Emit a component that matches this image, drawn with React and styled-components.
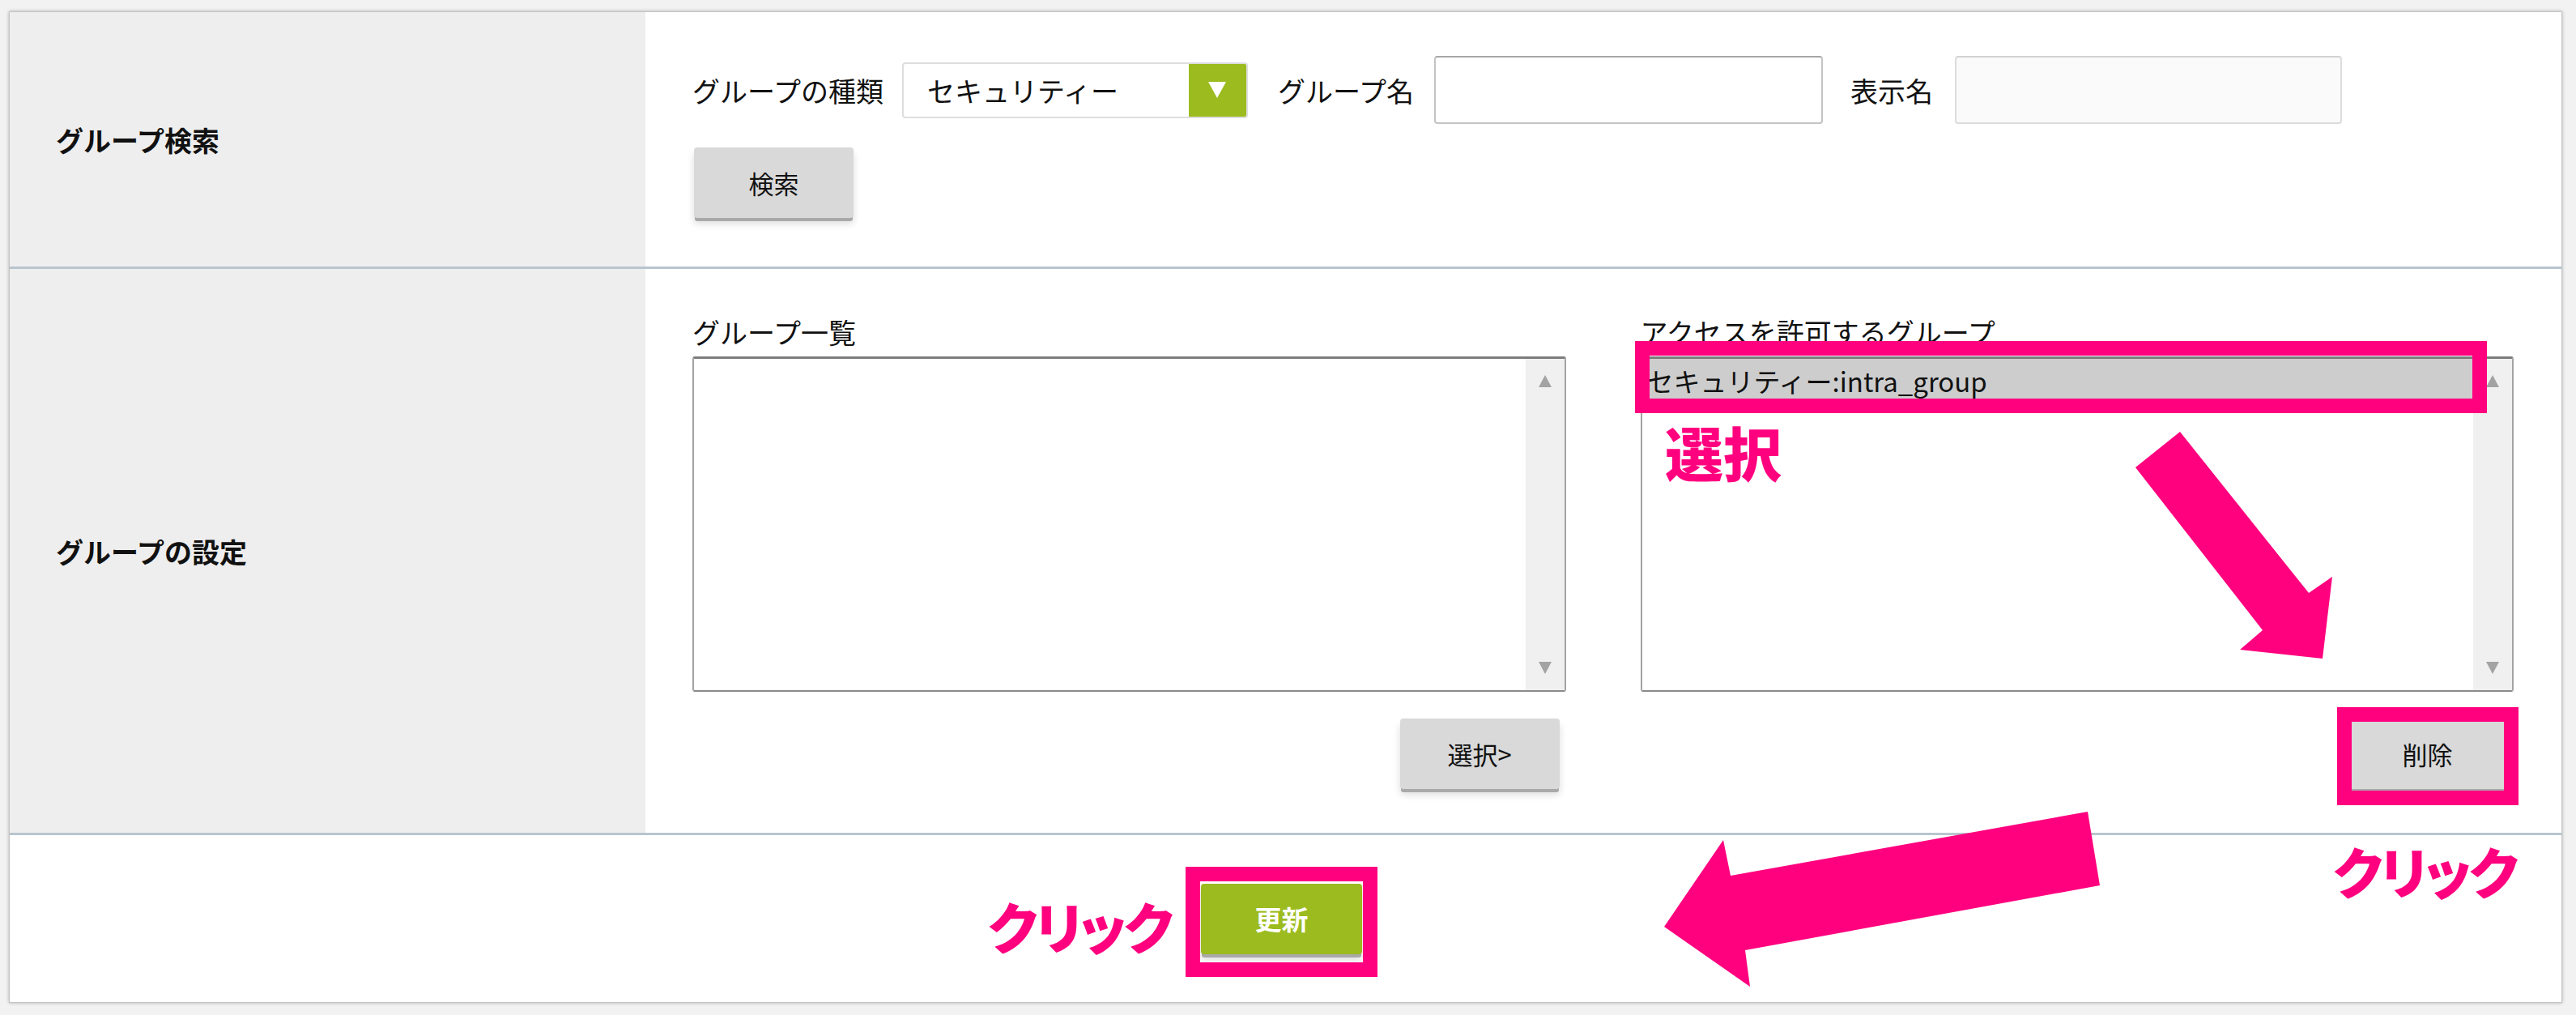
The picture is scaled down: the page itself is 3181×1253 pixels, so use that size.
import React from "react";
import styled, { createGlobalStyle } from "styled-components";

const PINK = "#ff007f";
const GREEN = "#9bbb1f";

const GlobalStyle = createGlobalStyle`
  html, body {
    margin: 0;
    padding: 0;
    background: #f2f2f2;
  }
  body {
    font-family: "Noto Sans CJK JP", "Noto Sans", sans-serif;
    color: #111;
  }
`;

const Page = styled.div`
  padding: 14px 17px 15px 11px;
`;

const Frame = styled.div`
  position: relative;
  width: 3153px;
  box-sizing: border-box;
  background: #fff;
  border: 1px solid #c4c4c4;
  box-shadow: 0 0 4px rgba(0, 0, 0, 0.28);
`;

const Row = styled.div`
  display: grid;
  grid-template-columns: 785px 1fr;
  height: ${(p) => p.$height}px;
  border-bottom: ${(p) => (p.$last ? "none" : "3px solid #b8c5cf")};
`;

const Head = styled.div`
  display: flex;
  align-items: center;
  padding-left: 57px;
  background: #eeeeee;
  font-size: 34px;
  font-weight: 700;
`;

const Body = styled.div`
  padding: ${(p) => p.$pad};
`;

const FullRow = styled.div`
  display: flex;
  align-items: center;
  justify-content: center;
  height: 206px;
  padding-right: 10px;
`;

const Line = styled.div`
  display: flex;
  align-items: center;
  height: 84px;
`;

const Label = styled.span`
  font-size: 34px;
  margin-right: ${(p) => p.$gap || 24}px;
  white-space: nowrap;
`;

const Select = styled.div`
  display: flex;
  width: 427px;
  height: 69px;
  box-sizing: border-box;
  border: 2px solid #dedede;
  border-radius: 4px;
  margin-right: 37px;
  overflow: hidden;
`;

const SelectValue = styled.div`
  flex: 1;
  display: flex;
  align-items: center;
  padding-left: 29px;
  font-size: 34px;
`;

const SelectArrow = styled.div`
  width: 71px;
  display: flex;
  align-items: center;
  justify-content: center;
  background: ${GREEN};
  &::after {
    content: "";
    border-left: 11px solid transparent;
    border-right: 11px solid transparent;
    border-top: 20px solid #fff;
  }
`;

const TextInput = styled.div`
  width: ${(p) => p.$width}px;
  height: 84px;
  box-sizing: border-box;
  border: 2px solid ${(p) => (p.$disabled ? "#dcdcdc" : "#c4c4c4")};
  border-top-color: ${(p) => (p.$disabled ? "#d2d2d2" : "#a6a6a6")};
  border-radius: 4px;
  background: ${(p) => (p.$disabled ? "#fafafa" : "#fff")};
  margin-right: ${(p) => p.$gap || 0}px;
`;

const Button = styled.div`
  position: relative;
  display: flex;
  align-items: center;
  justify-content: center;
  width: ${(p) => p.$width || 197}px;
  height: 87px;
  border-radius: 4px;
  background: ${(p) => (p.$primary ? GREEN : "#d9d9d9")};
  color: ${(p) => (p.$primary ? "#fff" : "#111")};
  font-size: ${(p) => (p.$primary ? 33 : 31)}px;
  font-weight: ${(p) => (p.$primary ? 700 : 400)};
  box-shadow: 0 5px 0 -1px #a9a9a9, 0 7px 10px rgba(0, 0, 0, 0.14);
  margin: ${(p) => p.$margin || 0};
`;

const Lists = styled.div`
  display: grid;
  grid-template-columns: 1fr 1fr;
  column-gap: 92px;
`;

const Column = styled.div`
  display: flex;
  flex-direction: column;
`;

const Caption = styled.div`
  font-size: 34px;
  line-height: 48px;
  margin-bottom: 6px;
`;

const ListBox = styled.div`
  position: relative;
  display: flex;
  height: 414px;
  box-sizing: border-box;
  border: 2px solid #a3a3a3;
  border-top: 3px solid #7d7d7d;
  border-bottom-color: #8a8a8a;
  border-radius: 3px;
`;

const Options = styled.div`
  flex: 1;
`;

const Option = styled.div`
  height: 60px;
  display: flex;
  align-items: center;
  padding: 0 0 6px 6px;
  box-sizing: border-box;
  font-size: 33px;
  background: ${(p) => (p.$selected ? "#cdcdcd" : "transparent")};
`;

const Track = styled.div`
  width: 48px;
  background: #f0f0f0;
  display: flex;
  flex-direction: column;
  justify-content: space-between;
  align-items: center;
  padding: 20px 0;
`;

const Nub = styled.div`
  border-left: 8px solid transparent;
  border-right: 8px solid transparent;
  border-${(p) => (p.$up ? "bottom" : "top")}: 15px solid #a3a3a3;
`;

const Actions = styled.div`
  display: flex;
  justify-content: flex-end;
  margin-top: 33px;
`;

const Callout = styled.div`
  position: absolute;
  inset: ${(p) => p.$inset};
  box-sizing: border-box;
  border: 18px solid ${PINK};
  pointer-events: none;
`;

const Overlay = styled.div`
  position: absolute;
  inset: 0;
  pointer-events: none;
`;

const Arrows = styled.svg`
  position: absolute;
  inset: 0;
  width: 100%;
  height: 100%;
`;

const Note = styled.span`
  position: absolute;
  left: ${(p) => p.$x}px;
  top: ${(p) => p.$y}px;
  color: ${PINK};
  font-size: ${(p) => p.$size || 72}px;
  font-weight: 900;
  line-height: 1;
  letter-spacing: ${(p) => p.$track || 0}px;
  white-space: nowrap;
  font-feature-settings: "palt";
`;

function Scroll() {
  return (
    <Track>
      <Nub $up />
      <Nub />
    </Track>
  );
}

export default function App() {
  return (
    <Page>
      <GlobalStyle />
      <Frame>
        <Row $height={314}>
          <Head>グループ検索</Head>
          <Body $pad="54px 0 0 58px">
            <Line>
              <Label $gap={23}>グループの種類</Label>
              <Select>
                <SelectValue>セキュリティー</SelectValue>
                <SelectArrow />
              </Select>
              <Label $gap={25}>グループ名</Label>
              <TextInput $width={480} $gap={34} />
              <Label $gap={27}>表示名</Label>
              <TextInput $width={478} $disabled />
            </Line>
            <Button $margin="29px 0 0 2px">検索</Button>
          </Body>
        </Row>

        <Row $height={696}>
          <Head>グループの設定</Head>
          <Body $pad="54px 59px 0 58px">
            <Lists>
              <Column>
                <Caption>グループ一覧</Caption>
                <ListBox>
                  <Options />
                  <Scroll />
                </ListBox>
                <Actions>
                  <Button $margin="0 8px 0 0">選択&gt;</Button>
                </Actions>
              </Column>
              <Column>
                <Caption>アクセスを許可するグループ</Caption>
                <ListBox>
                  <Options>
                    <Option $selected>セキュリティー:intra_group</Option>
                  </Options>
                  <Scroll />
                  <Callout $inset="-22px 31px auto -9px" style={{ height: 89 }} />
                </ListBox>
                <Actions>
                  <Button $margin="0 8px 0 0">
                    削除
                    <Callout $inset="-14px -14px -20px -13px" />
                  </Button>
                </Actions>
              </Column>
            </Lists>
          </Body>
        </Row>

        <FullRow>
          <Button $primary $width={199}>
            更新
            <Callout $inset="-21px -19px -28px -19px" />
          </Button>
        </FullRow>

        <Overlay>
          <Arrows viewBox="0 0 3151 1222" preserveAspectRatio="none">
            <g transform="translate(-12 -15)" fill={PINK}>
              <polygon points="2692,533 2851,732 2880,712 2868,813 2766,802 2794,778 2637,577" />
              <polygon points="2578,1002 2137,1081 2128,1037 2055,1144 2161,1218 2155,1173 2593,1093" />
            </g>
          </Arrows>
          <Note $x={2044} $y={506}>選択</Note>
          <Note $x={2869} $y={1026} $size={68} $track={-3}>クリック</Note>
          <Note $x={1208} $y={1094} $size={68} $track={-3}>クリック</Note>
        </Overlay>
      </Frame>
    </Page>
  );
}
